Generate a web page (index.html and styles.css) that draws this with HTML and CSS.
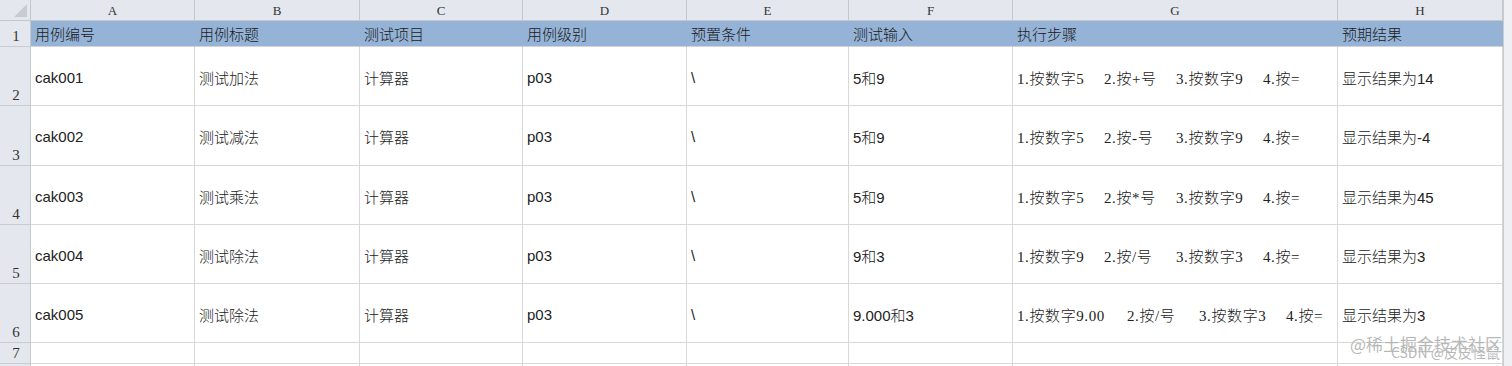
FILE: index.html
```html
<!DOCTYPE html>
<html lang="zh">
<head>
<meta charset="utf-8">
<link rel="stylesheet" href="styles.css">
</head>
<body>
<div class="sheet">
  <div class="grid">
    <div class="corner"><span class="tri"></span></div>
    <div class="ch">A</div><div class="ch">B</div><div class="ch">C</div><div class="ch">D</div>
    <div class="ch">E</div><div class="ch">F</div><div class="ch">G</div><div class="ch">H</div>

    <div class="rh r1">1</div>
    <div class="hc">用例编号</div><div class="hc">用例标题</div><div class="hc">测试项目</div><div class="hc">用例级别</div>
    <div class="hc">预置条件</div><div class="hc">测试输入</div><div class="hc">执行步骤</div><div class="hc">预期结果</div>

    <div class="rh">2</div>
    <div class="c">cak001</div><div class="c">测试加法</div><div class="c">计算器</div><div class="c">p03</div>
    <div class="c">\</div><div class="c">5和9</div>
    <div class="c steps"><span class="s1">1.按数字5</span><span class="s2">2.按+号</span><span class="s1">3.按数字9</span><span>4.按=</span></div>
    <div class="c">显示结果为14</div>

    <div class="rh">3</div>
    <div class="c">cak002</div><div class="c">测试减法</div><div class="c">计算器</div><div class="c">p03</div>
    <div class="c">\</div><div class="c">5和9</div>
    <div class="c steps"><span class="s1">1.按数字5</span><span class="s2">2.按-号</span><span class="s1">3.按数字9</span><span>4.按=</span></div>
    <div class="c">显示结果为-4</div>

    <div class="rh">4</div>
    <div class="c">cak003</div><div class="c">测试乘法</div><div class="c">计算器</div><div class="c">p03</div>
    <div class="c">\</div><div class="c">5和9</div>
    <div class="c steps"><span class="s1">1.按数字5</span><span class="s2">2.按*号</span><span class="s1">3.按数字9</span><span>4.按=</span></div>
    <div class="c">显示结果为45</div>

    <div class="rh">5</div>
    <div class="c">cak004</div><div class="c">测试除法</div><div class="c">计算器</div><div class="c">p03</div>
    <div class="c">\</div><div class="c">9和3</div>
    <div class="c steps"><span class="s1">1.按数字9</span><span class="s2">2.按/号</span><span class="s1">3.按数字3</span><span>4.按=</span></div>
    <div class="c">显示结果为3</div>

    <div class="rh">6</div>
    <div class="c">cak005</div><div class="c">测试除法</div><div class="c">计算器</div><div class="c">p03</div>
    <div class="c">\</div><div class="c">9.000和3</div>
    <div class="c steps"><span class="s0">1.按数字9.00</span><span class="s2">2.按/号</span><span class="s1">3.按数字3</span><span>4.按=</span></div>
    <div class="c">显示结果为3</div>

    <div class="rh r7">7</div>
    <div class="c e"></div><div class="c e"></div><div class="c e"></div><div class="c e"></div>
    <div class="c e"></div><div class="c e"></div><div class="c e"></div><div class="c e"></div>

    <div class="rh r8"></div>
    <div class="c e"></div><div class="c e"></div><div class="c e"></div><div class="c e"></div>
    <div class="c e"></div><div class="c e"></div><div class="c e"></div><div class="c e"></div>
  </div>
  <div class="side"></div>
  <div class="wm">
    <div class="wm1">@稀土掘金技术社区</div>
    <div class="wm2">CSDN @皮皮怪鼠</div>
  </div>
</div>
</body>
</html>
```
FILE: styles.css
```css
* { box-sizing: border-box; }
html, body { margin: 0; padding: 0; background: #fff; }
body { width: 1512px; height: 366px; overflow: hidden; }

.sheet {
  position: relative;
  display: flex;
  width: 1512px;
  height: 366px;
  font-family: "Liberation Serif", "Noto Sans CJK SC", serif;
  color: #111;
}

.grid {
  display: grid;
  grid-template-columns: 31px 164px 165px 163px 164px 162px 164px 325px 165px;
  grid-template-rows: 21px 26px 59px 60px 59px 59px 59px 21px 20px;
  width: 1503px;
}

.corner {
  position: relative;
  background: #e4e8ee;
  border-right: 1px solid #c4c8cc;
  border-bottom: 1px solid #c4c8cc;
}
.tri {
  position: absolute;
  right: 3px;
  bottom: 3px;
  width: 0;
  height: 0;
  border-left: 13px solid transparent;
  border-bottom: 13px solid #c8ccd2;
}

.ch {
  background: #e4e8ee;
  border-right: 1px solid #c4c8cc;
  border-bottom: 1px solid #c4c8cc;
  display: flex;
  align-items: center;
  justify-content: center;
  font-size: 13px;
  color: #333;
  font-family: "Liberation Serif", serif;
  padding-top: 1px;
}

.rh {
  background: #e4e8ee;
  border-right: 1px solid #c4c8cc;
  border-bottom: 1px solid #c8ccd0;
  display: flex;
  align-items: flex-end;
  justify-content: center;
  font-size: 15px;
  color: #333;
  font-family: "Liberation Serif", serif;
  padding-bottom: 1px;
  padding-left: 2px;
}

.hc {
  background: #95b3d7;
  border-right: 1px solid #95b3d7;
  border-bottom: 1px solid #d4d4d4;
  display: flex;
  align-items: center;
  padding-left: 4px;
  font-size: 15px;
  font-family: "Noto Sans CJK SC", sans-serif;
  font-weight: 300;
  color: #1a1a1a;
  white-space: nowrap;
}
.hc:last-child { border-right-color: #d4d4d4; }

.c {
  border-right: 1px solid #d8d8d8;
  border-bottom: 1px solid #d8d8d8;
  display: flex;
  align-items: center;
  padding-left: 4px;
  padding-top: 2px;
  font-size: 15px;
  font-family: "Liberation Sans", "Noto Sans CJK SC", sans-serif;
  font-weight: 300;
  white-space: pre;
  overflow: hidden;
  color: #222;
}
.steps { font-family: "Liberation Serif", "Noto Sans CJK SC", serif; letter-spacing: 0.6px; }
.steps span { flex: none; }
.steps .s0 { width: 110px; }
.steps .s1 { width: 87px; }
.steps .s2 { width: 72px; }

.side {
  flex: 1;
  background: #eef0f3;
  border-left: 1px solid #c8ccd0;
}

.wm {
  position: absolute;
  right: 12px;
  bottom: 7px;
  display: flex;
  flex-direction: column;
  align-items: flex-end;
  font-family: "Noto Sans CJK SC", sans-serif;
  color: rgba(120, 120, 120, 0.55);
  text-shadow: 0 0 1px #fff;
  line-height: 1;
}
.wm1 { font-size: 17px; margin-right: -2px; }
.wm2 { font-size: 14px; margin-top: -7px; }
```
